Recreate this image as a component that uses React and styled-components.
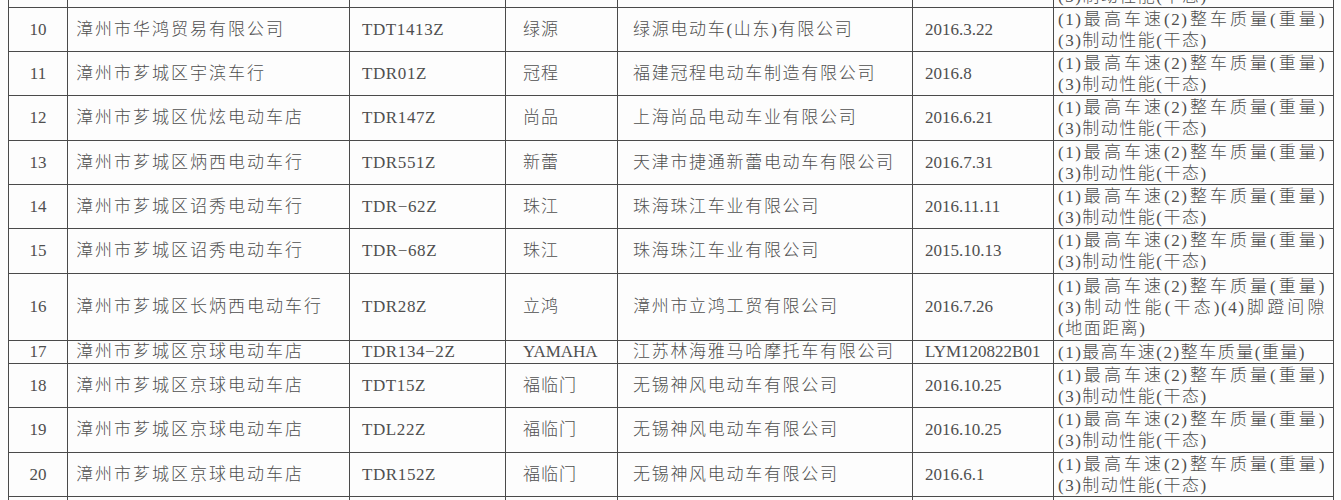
import React from "react";
import styled, { createGlobalStyle } from "styled-components";

const GlobalStyle = createGlobalStyle`
  html, body {
    margin: 0;
    padding: 0;
    background: #fdfdfd;
  }
  body {
    font-family: "Liberation Serif", "Noto Sans CJK SC", serif;
    color: #4f4f4f;
  }
`;

const Page = styled.div`
  height: 500px;
  overflow: hidden;
  padding-left: 8px;
`;

const Table = styled.table`
  margin-top: -37px;
  width: 1325px;
  border-collapse: collapse;
  table-layout: fixed;
  font-size: 17px;
`;

const Row = styled.tr`
  height: ${(p) => p.$h}px;
`;

const Cell = styled.td`
  border: 1px solid #4a4a4a;
  padding: 0 ${(p) => p.$right || 0}px 0 ${(p) => p.$left || 0}px;
  text-align: ${(p) => p.$align || "left"};
  vertical-align: middle;
  letter-spacing: ${(p) => p.$spacing || 0}px;
  line-height: 20px;
  white-space: nowrap;
  overflow: hidden;
  font-weight: 300;
`;

const Line = styled.div`
  line-height: 21px;
  height: 21px;
  text-align: ${(p) => (p.$justify ? "justify" : "left")};
  text-align-last: ${(p) => (p.$justify ? "justify" : "left")};
  white-space: ${(p) => (p.$justify ? "normal" : "nowrap")};
`;

const STD = [
  ["(1)最高车速(2)整车质量(重量)", true],
  ["(3)制动性能(干态)", false],
];

// first and last rows are only partly in view: their text lies outside the picture
const rows = [
  { h: 44, no: "", dealer: "", model: "", brand: "", maker: "", date: "", items: STD },
  { h: 44, no: "10", dealer: "漳州市华鸿贸易有限公司", model: "TDT1413Z", brand: "绿源", maker: "绿源电动车(山东)有限公司", date: "2016.3.22", items: STD },
  { h: 44, no: "11", dealer: "漳州市芗城区宇滨车行", model: "TDR01Z", brand: "冠程", maker: "福建冠程电动车制造有限公司", date: "2016.8", items: STD },
  { h: 45, no: "12", dealer: "漳州市芗城区优炫电动车店", model: "TDR147Z", brand: "尚品", maker: "上海尚品电动车业有限公司", date: "2016.6.21", items: STD },
  { h: 44, no: "13", dealer: "漳州市芗城区炳西电动车行", model: "TDR551Z", brand: "新蕾", maker: "天津市捷通新蕾电动车有限公司", date: "2016.7.31", items: STD },
  { h: 44, no: "14", dealer: "漳州市芗城区诏秀电动车行", model: "TDR−62Z", brand: "珠江", maker: "珠海珠江车业有限公司", date: "2016.11.11", items: STD },
  { h: 45, no: "15", dealer: "漳州市芗城区诏秀电动车行", model: "TDR−68Z", brand: "珠江", maker: "珠海珠江车业有限公司", date: "2015.10.13", items: STD },
  {
    h: 67, no: "16", dealer: "漳州市芗城区长炳西电动车行", model: "TDR28Z", brand: "立鸿", maker: "漳州市立鸿工贸有限公司", date: "2016.7.26",
    items: [
      ["(1)最高车速(2)整车质量(重量)", true],
      ["(3)制动性能(干态)(4)脚蹬间隙", true],
      ["(地面距离)", false],
    ],
  },
  { h: 23, no: "17", dealer: "漳州市芗城区京球电动车店", model: "TDR134−2Z", brand: "YAMAHA", maker: "江苏林海雅马哈摩托车有限公司", date: "LYM120822B01", items: [["(1)最高车速(2)整车质量(重量)", false]] },
  { h: 44, no: "18", dealer: "漳州市芗城区京球电动车店", model: "TDT15Z", brand: "福临门", maker: "无锡神风电动车有限公司", date: "2016.10.25", items: STD },
  { h: 45, no: "19", dealer: "漳州市芗城区京球电动车店", model: "TDL22Z", brand: "福临门", maker: "无锡神风电动车有限公司", date: "2016.10.25", items: STD },
  { h: 44, no: "20", dealer: "漳州市芗城区京球电动车店", model: "TDR152Z", brand: "福临门", maker: "无锡神风电动车有限公司", date: "2016.6.1", items: STD },
  { h: 44, no: "", dealer: "", model: "", brand: "", maker: "", date: "", items: [] },
];

const widths = [59, 282, 156, 112, 295, 141, 280];

export default function App() {
  return (
    <Page>
      <GlobalStyle />
      <Table>
        <colgroup>
          {widths.map((w, i) => (
            <col key={i} style={{ width: w }} />
          ))}
        </colgroup>
        <tbody>
          {rows.map((r, idx) => (
            <Row key={idx} $h={r.h}>
              <Cell $align="center">{r.no}</Cell>
              <Cell $left={8} $spacing={2}>{r.dealer}</Cell>
              <Cell $left={12} $spacing={0.6}>{r.model}</Cell>
              <Cell $left={17} $spacing={r.brand === "YAMAHA" ? 0 : 1}>{r.brand}</Cell>
              <Cell $left={15} $spacing={1.7}>{r.maker}</Cell>
              <Cell $left={12}>{r.date}</Cell>
              <Cell $left={4} $right={7} $spacing={1.5}>
                {r.items.map(([t, j], i) => (
                  <Line key={i} $justify={j}>
                    {t}
                  </Line>
                ))}
              </Cell>
            </Row>
          ))}
        </tbody>
      </Table>
    </Page>
  );
}
